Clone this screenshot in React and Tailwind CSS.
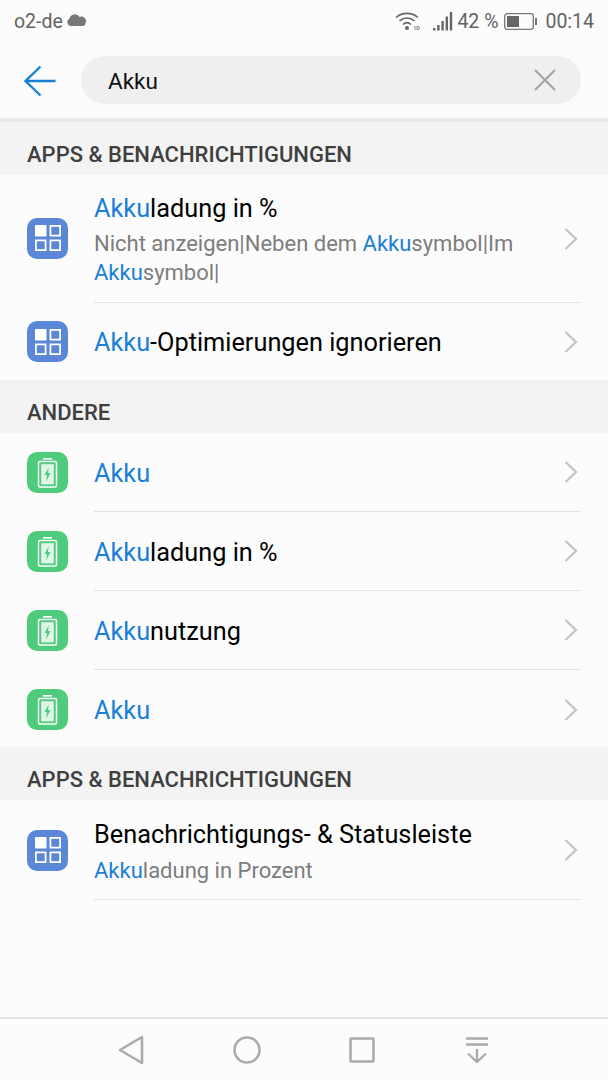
const B = ({ children }) => <span className="text-[#1a7fd6]">{children}</span>;

const Chevron = () => (
  <svg width="16" height="24" viewBox="0 0 16 24" fill="none" className="shrink-0 mr-[2px]">
    <path d="M2.5 2 L13 12 L2.5 22" stroke="#c4c4c4" strokeWidth="2.2" />
  </svg>
);

const GridIcon = () => (
  <div className="w-[41px] h-[41px] rounded-[10px] bg-[#5b87d9] flex items-center justify-center shrink-0">
    <svg width="26" height="26" viewBox="0 0 26 26" fill="none">
      <rect x="0" y="0" width="11.5" height="11.5" rx="0.5" fill="#fff" />
      <rect x="15.4" y="0.9" width="9.7" height="9.7" stroke="#fff" strokeWidth="1.8" />
      <rect x="0.9" y="15.4" width="9.7" height="9.7" stroke="#fff" strokeWidth="1.8" />
      <rect x="15.4" y="15.4" width="9.7" height="9.7" stroke="#fff" strokeWidth="1.8" />
    </svg>
  </div>
);

const BatteryIcon = () => (
  <div className="w-[41px] h-[41px] rounded-[10px] bg-[#4fcb7c] flex items-center justify-center shrink-0">
    <svg width="21" height="31" viewBox="0 0 21 31" fill="none">
      <rect x="6" y="1" width="9" height="1.6" fill="#fff" />
      <rect x="1.5" y="4.5" width="18" height="25.5" rx="1.5" stroke="#fff" strokeWidth="1.5" />
      <rect x="4.2" y="7.2" width="12.6" height="20.2" fill="#fff" fillOpacity="0.82" />
      <path d="M11.7 10.5 L7.5 18 H10 L9.2 24.5 L13.5 16 H11 Z" fill="#4fcb7c" />
    </svg>
  </div>
);

const Row = ({ icon, h, divider = true, top = "", children }) => (
  <div className={`flex pl-[27px] ${h} ${top}`}>
    <div className="w-[67px] shrink-0 flex items-center">{icon}</div>
    <div className={`flex-1 mr-[27px] flex items-center ${divider ? "border-b border-[#e3e3e3]" : ""}`}>
      <div className="flex-1 min-w-0">{children}</div>
      <Chevron />
    </div>
  </div>
);

const Section = ({ children }) => (
  <div className="h-[53px] bg-[#f3f3f3] pl-[27px] flex items-end pb-[8px] text-[22px] leading-[24px] font-medium text-[#3f3f3f]">
    {children}
  </div>
);

const Title = ({ children }) => <div className="text-[25.3px] leading-[32px] text-black pt-[2px]">{children}</div>;
const Sub = ({ children }) => <div className="text-[22px] leading-[29px] text-[#7d7d7d]">{children}</div>;

export default function App() {
  return (
    <div className="w-[608px] h-[1080px] bg-[#fcfcfc] flex flex-col overflow-hidden font-['Roboto',sans-serif]">
      <div className="h-[43px] flex items-center pl-[14px] pr-[14px] text-[#636363] text-[19.5px] shrink-0">
        <span>o2-de</span>
        <svg width="20" height="12" viewBox="0 0 20 12" className="ml-[3px] mb-[4px]">
          <path d="M4.5 12 A4 4 0 0 1 3.5 4.5 A5.5 5.5 0 0 1 13.5 3 A4.5 4.5 0 0 1 19.5 9 A3 3 0 0 1 16.5 12 Z" fill="#777" />
        </svg>
        <div className="flex-1" />
        <svg width="26" height="20" viewBox="0 0 26 20" fill="none" className="mr-[12px] mb-[2px]">
          <path d="M1 6.5 C7 1 17 1 23 6.5" stroke="#666" strokeWidth="1.6" />
          <path d="M4.5 10 C9 6 15 6 19.5 10" stroke="#666" strokeWidth="1.6" />
          <path d="M8 13.5 C10.5 11.2 13.5 11.2 16 13.5" stroke="#666" strokeWidth="1.6" />
          <circle cx="12" cy="17" r="2" fill="#666" />
          <path d="M20 15 V19 M22 15 L25 17 L22 19 Z" stroke="#888" strokeWidth="1" />
        </svg>
        <svg width="21" height="20" viewBox="0 0 21 20" className="mr-[3px] mb-[2px]">
          <rect x="0" y="17" width="2.4" height="2.5" fill="#666" />
          <rect x="4.2" y="14" width="2.4" height="5.5" fill="#666" />
          <rect x="8.4" y="10" width="2.4" height="9.5" fill="#666" />
          <rect x="12.6" y="5.5" width="2.4" height="14" fill="#666" />
          <rect x="16.8" y="1" width="2.4" height="18.5" fill="#666" />
        </svg>
        <span>42 %</span>
        <svg width="33" height="17" viewBox="0 0 33 17" fill="none" className="ml-[6px] mr-[8px]">
          <rect x="0.7" y="0.7" width="28.6" height="15.6" rx="2.5" stroke="#777" strokeWidth="1.3" />
          <rect x="3" y="3" width="12" height="11" fill="#666" />
          <rect x="31" y="5" width="2" height="7" fill="#777" />
        </svg>
        <span>00:14</span>
      </div>

      <div className="h-[79px] flex items-center pl-[24px] pr-[27px] border-b-[4px] border-[#e8e8e8] shrink-0">
        <svg width="32" height="32" viewBox="0 0 32 32" fill="none" className="shrink-0">
          <path d="M16.5 1.5 L1.5 16 L16.5 30.5 M1.5 16 H31.5" stroke="#1a7fd6" strokeWidth="2.4" />
        </svg>
        <div className="ml-[25px] flex-1 h-[48px] rounded-full bg-[#efefef] flex items-center pl-[27px] pr-[24px] -mt-[2px]">
          <span className="flex-1 text-[22.5px] text-[#111] pt-[5px]">Akku</span>
          <svg width="24" height="24" viewBox="0 0 24 24" fill="none">
            <path d="M2 2 L22 22 M22 2 L2 22" stroke="#a5a5a5" strokeWidth="2.2" />
          </svg>
        </div>
      </div>

      <Section>APPS &amp; BENACHRICHTIGUNGEN</Section>
      <Row icon={<div className="-mt-[2px]"><GridIcon /></div>} h="h-[128px]">
        <Title><B>Akku</B>ladung in %</Title>
        <div className="mt-[4px]">
          <Sub>Nicht anzeigen|Neben dem <B>Akku</B>symbol|Im <br /><B>Akku</B>symbol|</Sub>
        </div>
      </Row>
      <Row icon={<GridIcon />} h="h-[77px]" divider={false}>
        <Title><B>Akku</B>-Optimierungen ignorieren</Title>
      </Row>

      <Section>ANDERE</Section>
      <Row icon={<BatteryIcon />} h="h-[79px]"><div className="pt-[2px]"><Title><B>Akku</B></Title></div></Row>
      <Row icon={<BatteryIcon />} h="h-[79px]"><div className="pt-[2px]"><Title><B>Akku</B>ladung in %</Title></div></Row>
      <Row icon={<BatteryIcon />} h="h-[79px]"><div className="pt-[2px]"><Title><B>Akku</B>nutzung</Title></div></Row>
      <Row icon={<BatteryIcon />} h="h-[77px]" top="pt-[2px]" divider={false}><Title><B>Akku</B></Title></Row>

      <Section>APPS &amp; BENACHRICHTIGUNGEN</Section>
      <Row icon={<GridIcon />} h="h-[100px]">
        <div className="mt-[2px]"><Title>Benachrichtigungs- &amp; Statusleiste</Title></div>
        <div className="mt-[5px]"><Sub><B>Akku</B>ladung in Prozent</Sub></div>
      </Row>

      <div className="flex-1" />

      <div className="h-[63px] border-t-2 border-[#e4e4e4] flex items-center pl-[118px] shrink-0">
        <svg width="26" height="30" viewBox="0 0 26 30" fill="none">
          <path d="M24 2 L2 15 L24 28 Z" stroke="#ababab" strokeWidth="2.6" strokeLinejoin="round" />
        </svg>
        <svg width="28" height="28" viewBox="0 0 28 28" fill="none" className="ml-[89px]">
          <circle cx="14" cy="14" r="12.5" stroke="#ababab" strokeWidth="2.6" />
        </svg>
        <svg width="26" height="26" viewBox="0 0 26 26" fill="none" className="ml-[88px]">
          <rect x="1.5" y="1.5" width="23" height="23" rx="1" stroke="#ababab" strokeWidth="2.6" />
        </svg>
        <svg width="24" height="26" viewBox="0 0 24 26" fill="none" className="ml-[90px]">
          <path d="M1 1.5 H23 M1 7.5 H23 M12 12 V25 M3 16.5 L12 25 L21 16.5" stroke="#ababab" strokeWidth="2.4" />
        </svg>
      </div>
    </div>
  );
}
